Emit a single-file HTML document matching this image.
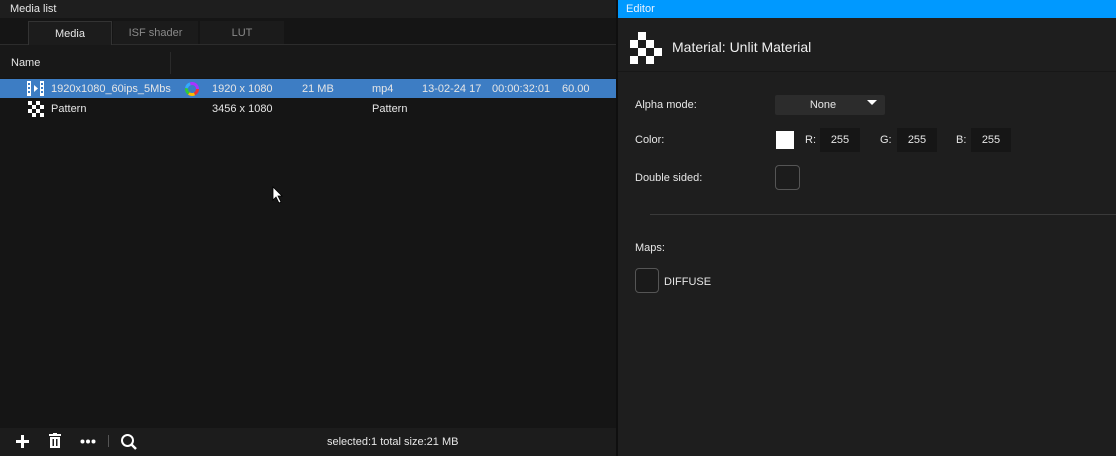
<!DOCTYPE html>
<html><head><style>
*{margin:0;padding:0;box-sizing:border-box}
body{width:1116px;height:456px;background:#0f0f0f;font-family:"Liberation Sans",sans-serif;font-size:11px;color:#e6e6e6;position:relative;overflow:hidden}
.a{position:absolute}
</style></head><body>
<!-- left panel -->
<div class="a" style="left:0;top:0;width:616px;height:18px;background:#1e1e1e"></div>
<div class="a" style="left:10px;top:3px;font-size:11px">Media list</div>
<div class="a" style="left:0;top:18px;width:616px;height:410px;background:#151515"></div>
<div class="a" style="left:0;top:44px;width:616px;height:1px;background:#2c2c2c"></div>
<div class="a" style="left:28px;top:21px;width:84px;height:24px;background:#1c1c1c;border:1px solid #333;border-bottom:none;text-align:center;line-height:24px">Media</div>
<div class="a" style="left:113px;top:21px;width:85px;height:23px;background:#1b1b1b;text-align:center;line-height:24px;color:#8a8a8a">ISF shader</div>
<div class="a" style="left:200px;top:21px;width:84px;height:23px;background:#1b1b1b;text-align:center;line-height:24px;color:#8a8a8a">LUT</div>
<div class="a" style="left:0;top:45px;width:616px;height:33px;background:#181818"></div>
<div class="a" style="left:170px;top:52px;width:1px;height:22px;background:#2a2a2a"></div>
<div class="a" style="left:11px;top:57px">Name</div>
<div class="a" style="left:0;top:79px;width:616px;height:19px;background:#3d7dc4"></div>
<svg class="a" style="left:27px;top:81px" width="17" height="15"><rect width="17" height="15" fill="#fff"/><rect x="4" y="0" width="9" height="15" fill="#3d7dc4"/><rect x="1" y="2" width="2" height="2" fill="#3d7dc4"/><rect x="1" y="6" width="2" height="2" fill="#3d7dc4"/><rect x="1" y="10" width="2" height="2" fill="#3d7dc4"/><rect x="14" y="2" width="2" height="2" fill="#3d7dc4"/><rect x="14" y="6" width="2" height="2" fill="#3d7dc4"/><rect x="14" y="10" width="2" height="2" fill="#3d7dc4"/><path d="M7 4 L11 7.5 L7 11Z" fill="#fff"/></svg>
<div class="a" style="left:51px;top:83px">1920x1080_60ips_5Mbs</div>
<svg class="a" style="left:184px;top:81px" width="16" height="16"><circle cx="8" cy="8" r="5.5" fill="none" stroke="#e33" stroke-width="3" stroke-dasharray="6 30"/><circle cx="8" cy="8" r="5.5" fill="none" stroke="#fb0" stroke-width="3" stroke-dasharray="0 6 6 30"/><circle cx="8" cy="8" r="5.5" fill="none" stroke="#3c3" stroke-width="3" stroke-dasharray="0 12 6 30"/><circle cx="8" cy="8" r="5.5" fill="none" stroke="#3af" stroke-width="3" stroke-dasharray="0 18 6 30"/><circle cx="8" cy="8" r="5.5" fill="none" stroke="#a3f" stroke-width="3" stroke-dasharray="0 24 11 30"/></svg>
<div class="a" style="left:212px;top:83px">1920 x 1080</div>
<div class="a" style="left:302px;top:83px">21 MB</div>
<div class="a" style="left:372px;top:83px">mp4</div>
<div class="a" style="left:422px;top:83px">13-02-24 17</div>
<div class="a" style="left:492px;top:83px">00:00:32:01</div>
<div class="a" style="left:562px;top:83px">60.00</div>
<svg class="a" style="left:28px;top:101px" width="16" height="16"><g fill="#fff"><rect x="0" y="0" width="4" height="4"/><rect x="8" y="0" width="4" height="4"/><rect x="4" y="4" width="4" height="4"/><rect x="12" y="4" width="4" height="4"/><rect x="0" y="8" width="4" height="4"/><rect x="8" y="8" width="4" height="4"/><rect x="4" y="12" width="4" height="4"/><rect x="12" y="12" width="4" height="4"/></g></svg>
<div class="a" style="left:51px;top:103px">Pattern</div>
<div class="a" style="left:212px;top:103px">3456 x 1080</div>
<div class="a" style="left:372px;top:103px">Pattern</div>
<svg class="a" style="left:272px;top:186px" width="12" height="18"><path d="M1 1 L1 14 L4 11 L7 17 L9 16 L6 10 L10 10Z" fill="#fff" stroke="#000" stroke-width="0.8"/></svg>
<div class="a" style="left:0;top:428px;width:616px;height:28px;background:#1c1c1c"></div>
<svg class="a" style="left:15px;top:434px" width="15" height="15"><path d="M7.5 1v13M1 7.5h13" stroke="#fff" stroke-width="3"/></svg>
<svg class="a" style="left:48px;top:433px" width="14" height="16"><rect x="1" y="1" width="12" height="2" fill="#fff"/><rect x="5" y="0" width="4" height="2" fill="#fff"/><path d="M2 4h10v11H2z" fill="#fff"/><rect x="4.5" y="6" width="1.5" height="7" fill="#1c1c1c"/><rect x="8" y="6" width="1.5" height="7" fill="#1c1c1c"/></svg>
<svg class="a" style="left:80px;top:439px" width="16" height="5"><circle cx="2.5" cy="2.5" r="2" fill="#fff"/><circle cx="8" cy="2.5" r="2" fill="#fff"/><circle cx="13.5" cy="2.5" r="2" fill="#fff"/></svg>
<div class="a" style="left:108px;top:435px;width:1px;height:12px;background:#555"></div>
<svg class="a" style="left:120px;top:433px" width="18" height="18"><circle cx="7.5" cy="7.5" r="5.5" fill="none" stroke="#fff" stroke-width="2"/><path d="M11.5 11.5 L16 16" stroke="#fff" stroke-width="2.5"/></svg>
<div class="a" style="left:327px;top:436px;font-size:11px">selected:1 total size:21 MB</div>
<!-- right panel -->
<div class="a" style="left:618px;top:0;width:498px;height:18px;background:#0099ff"></div>
<div class="a" style="left:626px;top:3px;color:#e8f2ff">Editor</div>
<div class="a" style="left:618px;top:18px;width:498px;height:438px;background:#1e1e1e"></div>
<div class="a" style="left:618px;top:71px;width:498px;height:1px;background:#171717"></div>
<svg class="a" style="left:630px;top:32px" width="32" height="32"><g fill="#fff"><rect x="8" y="0" width="8" height="8"/><rect x="0" y="8" width="8" height="8"/><rect x="16" y="8" width="8" height="8"/><rect x="8" y="16" width="8" height="8"/><rect x="24" y="16" width="8" height="8"/><rect x="16" y="24" width="8" height="8"/><rect x="0" y="24" width="8" height="8"/></g></svg>
<div class="a" style="left:672px;top:39px;font-size:14px;color:#f0f0f0">Material: Unlit Material</div>
<div class="a" style="left:635px;top:99px">Alpha mode:</div>
<div class="a" style="left:775px;top:95px;width:110px;height:20px;background:#2c2c2c;border-radius:2px;text-align:center;line-height:20px;padding-right:14px">None</div>
<div class="a" style="left:867px;top:100px;width:0;height:0;border-left:5px solid transparent;border-right:5px solid transparent;border-top:5px solid #fff"></div>
<div class="a" style="left:635px;top:134px">Color:</div>
<div class="a" style="left:776px;top:131px;width:18px;height:18px;background:#fff"></div>
<div class="a" style="left:805px;top:134px">R:</div>
<div class="a" style="left:820px;top:128px;width:40px;height:24px;background:#161616;text-align:center;line-height:24px">255</div>
<div class="a" style="left:880px;top:134px">G:</div>
<div class="a" style="left:897px;top:128px;width:40px;height:24px;background:#161616;text-align:center;line-height:24px">255</div>
<div class="a" style="left:956px;top:134px">B:</div>
<div class="a" style="left:971px;top:128px;width:40px;height:24px;background:#161616;text-align:center;line-height:24px">255</div>
<div class="a" style="left:635px;top:172px">Double sided:</div>
<div class="a" style="left:775px;top:165px;width:25px;height:25px;background:#1c1c1c;border:1px solid #555;border-radius:4px"></div>
<div class="a" style="left:650px;top:214px;width:466px;height:1px;background:#3a3a3a"></div>
<div class="a" style="left:635px;top:242px">Maps:</div>
<div class="a" style="left:635px;top:268px;width:24px;height:25px;background:#1a1a1a;border:1px solid #555;border-radius:4px"></div>
<div class="a" style="left:664px;top:276px">DIFFUSE</div>
</body></html>
